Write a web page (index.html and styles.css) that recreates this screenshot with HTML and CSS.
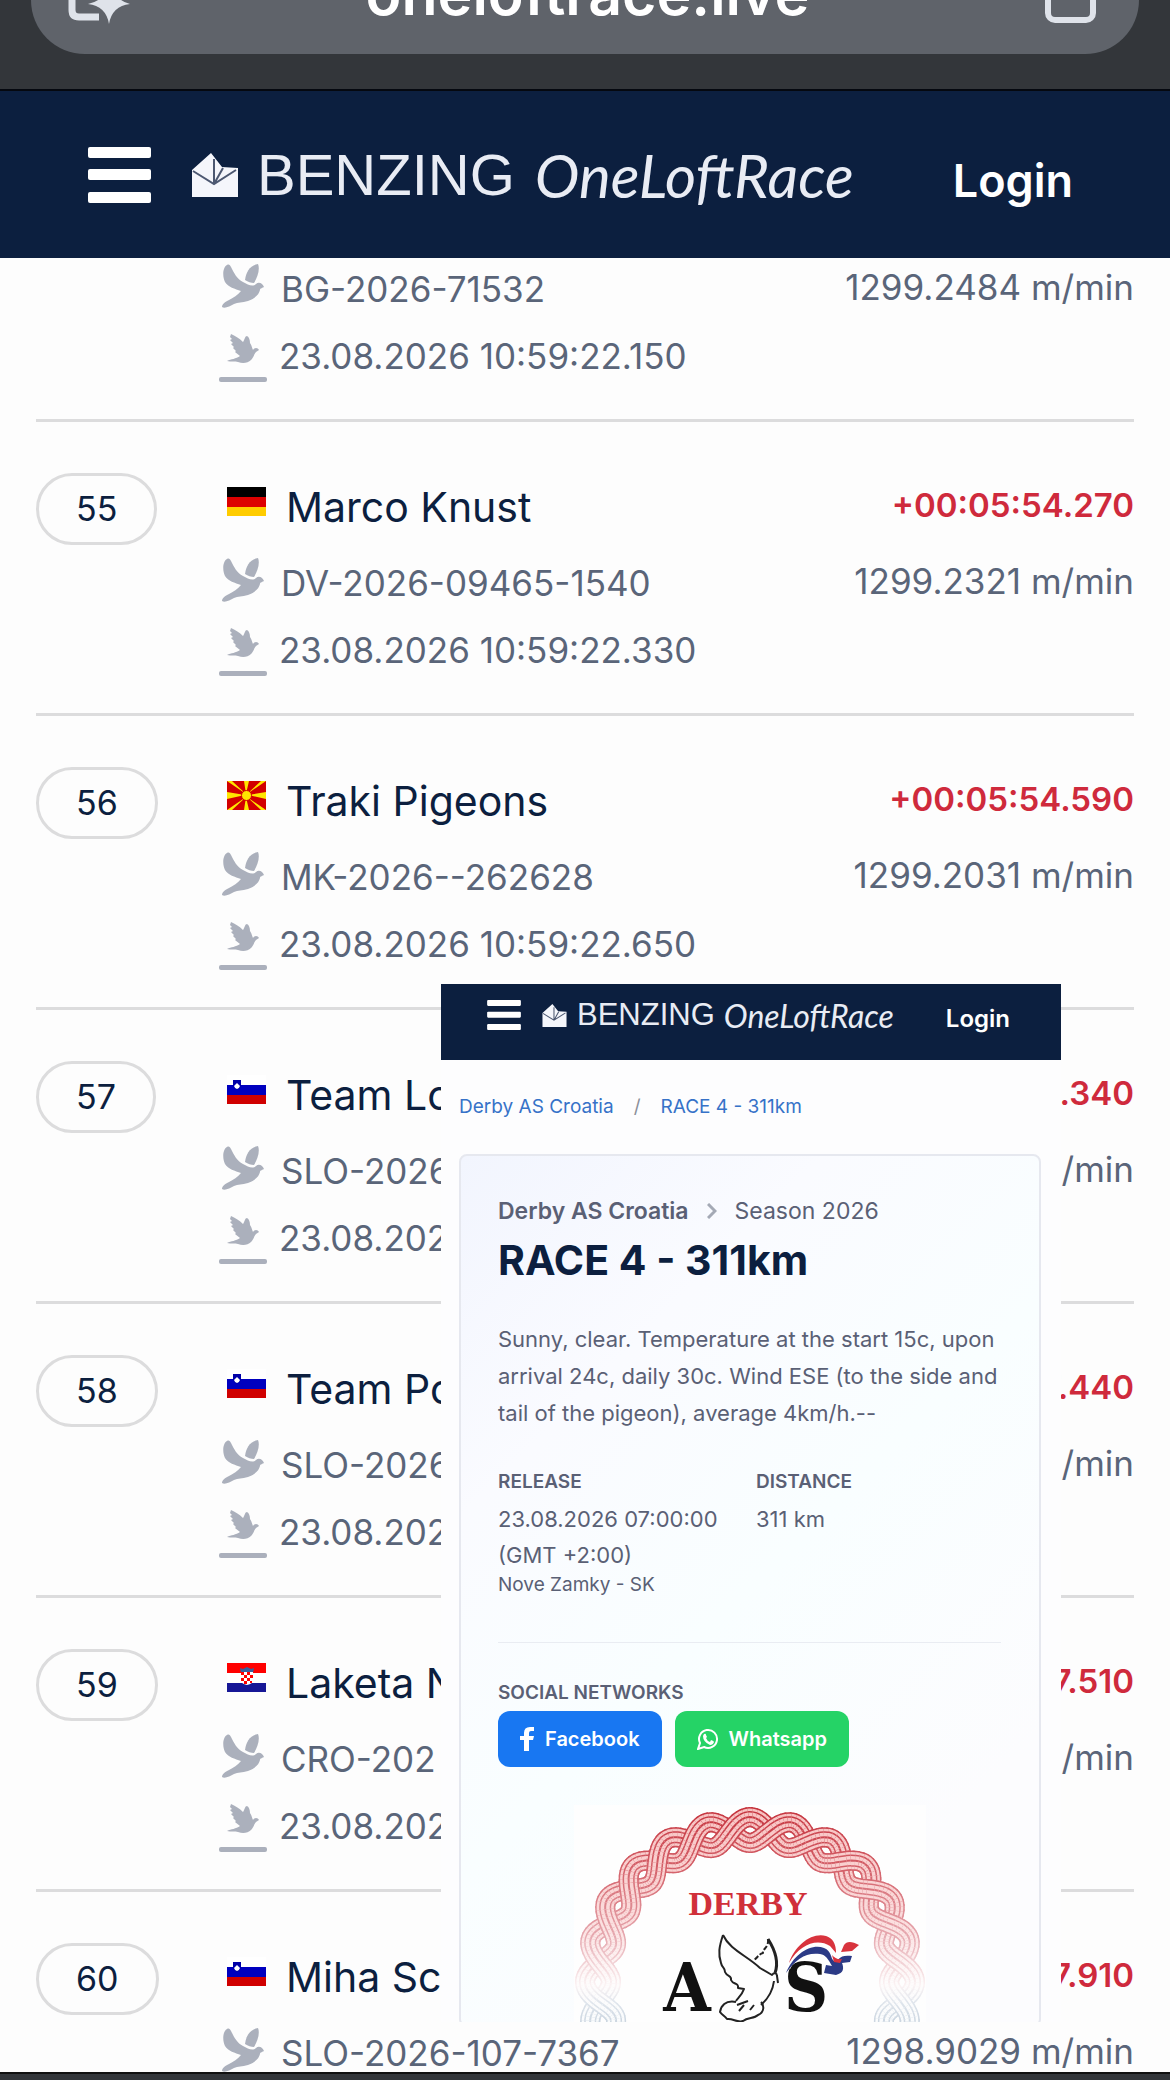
FILE: index.html
```
<!DOCTYPE html>
<html lang="en">

<head>
    <meta charset="UTF-8">
    <meta name="viewport" content="width=device-width, initial-scale=1.0">
    <title>oneloftrace.live</title>
    <link rel="stylesheet" href="styles.css">
</head>

<body>

    <svg width="0" height="0" class="sprite" aria-hidden="true">
        <symbol id="bird" viewBox="0 0 42 44">
            <path d="M5 1C1 3 0 12 3 18C6 23 13 25 19 27C16 31 11 34 7 36C3 38 0 40 0 43C3 45 8 42 12 40C16 38 20 39 26 37C34 34 37 30 38 26C38 24 41 24 42 23C41 20 37 17 34 20C31 23 26 21 21 18C15 15 12 9 9 3C8 1 7 0 5 1Z" />
            <path d="M23 16C24 8 28 1 36 0C38 5 36 12 32 19C29 19 26 18 23 16Z" />
        </symbol>
        <symbol id="landing" viewBox="0 0 48 48">
            <path d="M12 0L11 3L13 5L11 6L14 9L12 10L15 13L14 14L17 17L16 18L21 22C17 25 12 25 8 27C12 28 16 27 19 28C24 30 29 29 32 26C35 23 35 20 37 18L40 16C39 14 36 13 34 16C33 14 33 12 31 9C31 6 30 3 28 2C26 2 26 5 24 8C20 4 16 2 12 0Z" />
            <rect y="43" width="48" height="5" rx="2" />
        </symbol>
        <symbol id="flag-de" viewBox="0 0 39 29">
            <rect width="39" height="10" />
            <rect y="10" width="39" height="10" fill="#d00" />
            <rect y="20" width="39" height="9" fill="#fc0" />
        </symbol>
        <symbol id="flag-mk" viewBox="0 0 39 29">
            <rect width="39" height="29" fill="#d20000" />
            <path d="M0 0h5L19 13zM39 0h-5L20 13zM0 29h5L19 16zM39 29h-5L20 16zM17 0h5L19 13zM17 29h5L19 16zM0 11v7l18-4zM39 11v7L21 14z" fill="#ffe600" />
            <circle cx="19.500" cy="14.500" r="5" fill="#ffe600" stroke="#d20000" />
        </symbol>
        <symbol id="flag-si" viewBox="0 0 39 29">
            <rect width="39" height="10" fill="#fff" />
            <rect y="10" width="39" height="10" fill="#0000bf" />
            <rect y="20" width="39" height="9" fill="#d00000" />
            <path d="M6 5h8v5q0 3-4 5q-4-2-4-5z" fill="#0000a8" />
            <path d="M7 11l3-3l3 3q-1 3-3 3t-3-3z" fill="#fff" />
        </symbol>
        <symbol id="flag-hr" viewBox="0 0 39 29">
            <rect width="39" height="10" fill="#f00" />
            <rect y="10" width="39" height="10" fill="#fff" />
            <rect y="20" width="39" height="9" fill="#171796" />
            <path d="M13 5l3 1l4-2l4 2l3-1l-1 5h-12z" fill="#37609c" />
            <path d="M14 9h12v8q0 4-6 5q-6-1-6-5z" fill="#fff" />
            <path d="M14 9h3v3h-3zM20 9h3v3h-3zM17 12h3v3h-3zM23 12h3v3h-3zM14 15h3v3h-3zM20 15h3v3h-3zM17 18h3v3h-3zM23 18h2v2h-2z" fill="#f00" />
        </symbol>
        <symbol id="menu" viewBox="0 0 63 56">
            <rect width="63" height="11" rx="2" />
            <rect y="22" width="63" height="11" rx="2" />
            <rect y="45" width="63" height="11" rx="2" />
        </symbol>
        <symbol id="loft" viewBox="0 0 46 44">
            <path d="M0 17L19 0L30 14L46 15V44H0Z" />
            <path d="M1 18L22 31L44 17M22 31V6M22 31L31 15" fill="none" stroke="#4d5871" stroke-width="2" />
        </symbol>
    </svg>

    <div class="app">

        <div class="browser-bar">
            <div class="address">
                <button class="tab-btn" aria-label="Page tools">
                    <svg width="62" height="50" viewBox="0 0 62 50">
                        <path d="M4 0V36Q4 43 11 43H31" fill="none" stroke="#dfe3ea" stroke-width="7" />
                        <path d="M41 0Q41 26 20 30Q38 32 41 50Q44 32 62 30Q44 26 41 0Z" fill="#dfe3ea" />
                    </svg>
                </button>
                <span class="url">oneloftrace.live</span>
                <button class="tab-btn" aria-label="Tabs">
                    <svg width="52" height="46" viewBox="0 0 52 46">
                        <rect x="3" y="-10" width="45" height="52" rx="7" fill="none" stroke="#dfe3ea" stroke-width="6" />
                    </svg>
                </button>
            </div>
        </div>

        <header class="site-header">
            <button class="menu-btn" aria-label="Menu"><svg><use href="#menu" /></svg></button>
            <a class="brand" href="#">
                <svg><use href="#loft" /></svg>
                <span class="brand-name">BENZING</span>
                <em>OneLoftRace</em>
            </a>
            <a class="login" href="#">Login</a>
        </header>

        <ol class="results">
            <li class="entry cut">
                <div class="pigeon">
                    <p class="ring"><svg class="bird"><use href="#bird" /></svg>BG-2026-71532</p>
                    <p class="arrival"><svg class="landing"><use href="#landing" /></svg>23.08.2026 10:59:22.150</p>
                </div>
                <div class="timing">
                    <p class="speed">1299.2484 m/min</p>
                </div>
            </li>
            <li class="entry">
                <span class="rank">55</span>
                <div class="pigeon">
                    <h2><svg class="flag"><use href="#flag-de" /></svg>Marco Knust</h2>
                    <p class="ring"><svg class="bird"><use href="#bird" /></svg>DV-2026-09465-1540</p>
                    <p class="arrival"><svg class="landing"><use href="#landing" /></svg>23.08.2026 10:59:22.330</p>
                </div>
                <div class="timing">
                    <p class="gap">+00:05:54.270</p>
                    <p class="speed">1299.2321 m/min</p>
                </div>
            </li>
            <li class="entry">
                <span class="rank">56</span>
                <div class="pigeon">
                    <h2><svg class="flag"><use href="#flag-mk" /></svg>Traki Pigeons</h2>
                    <p class="ring"><svg class="bird"><use href="#bird" /></svg>MK-2026--262628</p>
                    <p class="arrival"><svg class="landing"><use href="#landing" /></svg>23.08.2026 10:59:22.650</p>
                </div>
                <div class="timing">
                    <p class="gap">+00:05:54.590</p>
                    <p class="speed">1299.2031 m/min</p>
                </div>
            </li>
            <li class="entry">
                <span class="rank">57</span>
                <div class="pigeon">
                    <h2><svg class="flag"><use href="#flag-si" /></svg>Team Lo</h2>
                    <p class="ring"><svg class="bird"><use href="#bird" /></svg>SLO-2026</p>
                    <p class="arrival"><svg class="landing"><use href="#landing" /></svg>23.08.202</p>
                </div>
                <div class="timing">
                    <p class="gap">.340</p>
                    <p class="speed">/min</p>
                </div>
            </li>
            <li class="entry">
                <span class="rank">58</span>
                <div class="pigeon">
                    <h2><svg class="flag"><use href="#flag-si" /></svg>Team Po</h2>
                    <p class="ring"><svg class="bird"><use href="#bird" /></svg>SLO-2026</p>
                    <p class="arrival"><svg class="landing"><use href="#landing" /></svg>23.08.202</p>
                </div>
                <div class="timing">
                    <p class="gap">7.440</p>
                    <p class="speed">/min</p>
                </div>
            </li>
            <li class="entry">
                <span class="rank">59</span>
                <div class="pigeon">
                    <h2><svg class="flag"><use href="#flag-hr" /></svg>Laketa N</h2>
                    <p class="ring"><svg class="bird"><use href="#bird" /></svg>CRO-202</p>
                    <p class="arrival"><svg class="landing"><use href="#landing" /></svg>23.08.202</p>
                </div>
                <div class="timing">
                    <p class="gap">7.510</p>
                    <p class="speed">/min</p>
                </div>
            </li>
            <li class="entry">
                <span class="rank">60</span>
                <div class="pigeon">
                    <h2><svg class="flag"><use href="#flag-si" /></svg>Miha Sc</h2>
                    <p class="ring"><svg class="bird"><use href="#bird" /></svg>SLO-2026-107-7367</p>
                    <p class="arrival"></p>
                </div>
                <div class="timing">
                    <p class="gap">7.910</p>
                    <p class="speed">1298.9029 m/min</p>
                </div>
            </li>
        </ol>

        <div class="bottom-bar"></div>

        <!-- race info, lies over the result list -->
        <section class="race-window">
            <header class="site-header small">
                <button class="menu-btn" aria-label="Menu"><svg><use href="#menu" /></svg></button>
                <a class="brand" href="#">
                    <svg><use href="#loft" /></svg>
                    <span class="brand-name">BENZING</span>
                    <em>OneLoftRace</em>
                </a>
                <a class="login" href="#">Login</a>
            </header>

            <nav class="crumbs">
                <a href="#">Derby AS Croatia</a>
                <span>/</span>
                <a href="#">RACE 4 - 311km</a>
            </nav>

            <div class="race-card">
                <p class="season">
                    <strong>Derby AS Croatia</strong>
                    <svg width="10" height="16" viewBox="0 0 10 16"><path d="M1 1L8 8L1 15" fill="none" stroke="#a4a9b5" stroke-width="3" /></svg>
                    Season 2026
                </p>
                <h1>RACE 4 - 311km</h1>
                <p class="weather">Sunny, clear. Temperature at the start 15c, upon arrival 24c, daily 30c. Wind ESE (to the side and tail of the pigeon), average 4km/h.--</p>

                <div class="facts">
                    <div>
                        <h3>RELEASE</h3>
                        <p>23.08.2026 07:00:00<br>(GMT +2:00)</p>
                        <small>Nove Zamky - SK</small>
                    </div>
                    <div>
                        <h3>DISTANCE</h3>
                        <p>311 km</p>
                    </div>
                </div>

                <h3>SOCIAL NETWORKS</h3>
                <div class="social">
                    <button class="facebook">
                        <svg width="15" height="24" viewBox="0 0 15 24"><path d="M4 24V13H0V9H4V6Q4 0 10 0H14V4H11Q9 4 9 6V9H14L13 13H9V24Z" fill="#fff" /></svg>
                        Facebook
                    </button>
                    <button class="whatsapp">
                        <svg width="22" height="22" viewBox="0 0 22 22">
                            <path d="M1 21L3 15A9 9 0 1 1 7 19Z" fill="none" stroke="#fff" stroke-width="2" />
                            <path d="M7 6Q9 5 9 7L10 9L9 10Q10 13 13 14L14 12Q17 13 17 14Q16 17 13 17Q6 14 6 8Z" fill="#fff" />
                        </svg>
                        Whatsapp
                    </button>
                </div>

                <svg class="derby-logo" viewBox="0 0 352 220">
                    <defs>
                        <linearGradient id="edge" gradientUnits="userSpaceOnUse" x1="0" y1="0" x2="0" y2="220">
                            <stop offset="0" stop-color="#c4303a" />
                            <stop offset="0.300" stop-color="#d4626b" />
                            <stop offset="0.600" stop-color="#e6a9b0" />
                            <stop offset="0.820" stop-color="#fbf3f4" />
                            <stop offset="0.900" stop-color="#dfe5ec" />
                            <stop offset="1" stop-color="#c8d3de" />
                        </linearGradient>
                        <linearGradient id="fill" gradientUnits="userSpaceOnUse" x1="0" y1="0" x2="0" y2="220">
                            <stop offset="0" stop-color="#f8c2c1" />
                            <stop offset="0.500" stop-color="#fbdcdc" />
                            <stop offset="0.800" stop-color="#fefcfc" />
                            <stop offset="1" stop-color="#fafcfd" />
                        </linearGradient>
                    </defs>
                    <rect width="352" height="220" fill="#fefefe" />
                    <g id="braid" fill="none"></g>
                    <text x="174" y="110" class="derby-text">DERBY</text>
                    <text x="113" y="206" class="derby-letter">A</text>
                    <text x="232" y="206" class="derby-letter">S</text>
                    <g fill="none" stroke="#222" stroke-width="2" stroke-linejoin="round">
                        <path d="M149 130C145 142 144 149 147 158C148 163 151 162 151 167C153 172 158 170 157 175C159 180 165 177 164 183L170 184C168 190 164 193 162 196" />
                        <path d="M149 130C156 145 172 150 186 163L198 170C200 167 203 168 203 171L204 178M200 176C199 184 196 192 187 200" />
                        <path d="M194 134C201 145 205 157 201 168" stroke-width="3" />
                        <path d="M194 134C195 143 188 144 189 148C185 149 184 152 180 155" stroke-dasharray="5 2" />
                        <path d="M162 197C151 195 147 201 146 207C148 210 151 211 153 214C159 213 163 218 169 216C174 212 180 214 184 210C191 207 190 200 187 197M163 200L174 196M165 206L170 200M176 205L180 200" />
                    </g>
                    <path d="M214 163C221 144 238 133 253 139C262 143 259 149 268 151" fill="none" stroke="#fff" stroke-width="5" />
                    <path d="M215 158C221 140 238 127 252 131Q262 134 262 148L256 141C243 133 226 139 215 158Z" fill="#d8333d" />
                    <path d="M212 168C220 148 238 138 250 143C258 146 256 153 260 156C266 156 264 149 278 151L276 157L268 158C270 163 270 168 262 170L250 168L252 160L258 161C254 154 252 150 246 149C232 147 222 154 212 168Z" fill="#2b3a86" />
                    <path d="M258 150Q262 155 268 154L266 158L260 157ZM270 140Q274 134 285 140L278 146L267 147Z" fill="#d8333d" />
                </svg>
            </div>
        </section>

    </div>

    <script>

        // two strands twisted round the arch, short pieces drawn from back to front
        let pieces = [];
        let step = 0.02;

        function phase(a, strand) {
            return 12 * a + Math.PI / 2 + strand * Math.PI;
        }

        function point(a, strand) {
            let r = 152 + 13 * Math.sin(phase(a, strand));
            return (176 - r * Math.cos(a)).toFixed(1) + " " + (177 - r * Math.sin(a)).toFixed(1);
        }

        for (let strand = 0; strand < 2; strand++) {
            for (let a = -0.4; a < Math.PI + 0.4; a += step) {
                pieces.push({ depth: Math.cos(phase(a, strand)), from: a - step / 2, to: a + step * 1.2, strand: strand });
            }
        }

        pieces.sort((a, b) => a.depth - b.depth);

        let out = "";
        for (let p of pieces) {
            let d = "M" + point(p.from, p.strand) + "L" + point((p.from + p.to) / 2, p.strand) + "L" + point(p.to, p.strand);
            [["edge", 20], ["fill", 17], ["edge", 12], ["fill", 9], ["edge", 2]].forEach(s => {
                out += `<path d="${d}" stroke="url(#${s[0]})" stroke-width="${s[1]}" />`;
            });
        }
        document.getElementById("braid").innerHTML = out;

    </script>

</body>

</html>
```
FILE: styles.css
```
* {
    box-sizing: border-box;
}

body, h1, h2, h3, p, ol {
    margin: 0;
    padding: 0;
}

body {
    font-family: Inter, "Liberation Sans", sans-serif;
    color: #0c1f3f;
    background: #fdfdfd;
}

button {
    font: inherit;
    border: 0;
    padding: 0;
    background: none;
}

a {
    text-decoration: none;
}

.sprite {
    position: absolute;
}

.app {
    position: relative;
    display: flex;
    flex-direction: column;
    height: 100vh;
    overflow: hidden;
}

/* browser chrome */

.browser-bar {
    flex: none;
    height: 91px;
    padding: 0 31px;
    background: #33363a;
    border-bottom: 2px solid #05080f;
}

.address {
    display: flex;
    justify-content: space-between;
    align-items: flex-end;
    height: 54px;
    padding: 0 42px 30px 37px;
    background: #5f636a;
    border-radius: 0 0 54px 54px;
}

.url {
    font-size: 59px;
    line-height: 60px;
    font-weight: 600;
    color: #fff;
}

.tab-btn svg {
    display: block;
}

/* site header */

.site-header {
    flex: none;
    display: flex;
    align-items: center;
    height: 167px;
    padding: 0 97px 0 88px;
    background: #0c1f3f;
}

.menu-btn svg {
    display: block;
    width: 63px;
    height: 56px;
    fill: #fff;
}

.brand {
    display: flex;
    align-items: center;
    margin-left: 41px;
    font-family: "Liberation Sans", sans-serif;
    font-size: 58px;
    color: #e9ecf4;
}

.brand svg {
    width: 46px;
    height: 44px;
    margin-right: 19px;
    fill: #f5f6fb;
}

.brand em {
    margin-left: 20px;
    font-family: Lato, sans-serif;
    font-size: 60px;
}

.login {
    margin-left: auto;
    padding-top: 12px;
    font-size: 45px;
    font-weight: 600;
    color: #fff;
}

/* results */

.results {
    flex: 1;
    min-height: 0;
    overflow: hidden;
    padding: 0 36px;
    list-style: none;
}

.entry {
    display: flex;
    align-items: flex-end;
    height: 294px;
    padding-bottom: 34px;
    border-bottom: 3px solid #dcdcdd;
}

.entry.cut {
    height: 164px;
}

.rank {
    align-self: flex-start;
    margin-top: 51px;
    padding: 0 37px;
    border: 3px solid #dcdcdd;
    border-radius: 36px;
    font-size: 34px;
    line-height: 66px;
}

.pigeon {
    position: absolute;
    left: 219px;
}

.pigeon h2, .pigeon p {
    display: flex;
    align-items: center;
    height: 76px;
    white-space: nowrap;
}

.pigeon h2 {
    padding-left: 8px;
    font-size: 41px;
    font-weight: 400;
}

.pigeon p, .speed {
    font-size: 35px;
    color: #5a6579;
}

.pigeon .ring {
    padding-left: 3px;
}

.pigeon .arrival {
    height: 58px;
}

.flag {
    width: 39px;
    height: 29px;
    margin: 0 20px 12px 0;
}

.bird {
    width: 42px;
    height: 44px;
    margin: 0 17px 6px 0;
    fill: #abb0bc;
}

.landing {
    width: 48px;
    height: 48px;
    margin: 4px 12px 0 0;
    fill: #abb0bc;
}

.timing {
    margin-left: auto;
    padding-bottom: 60px;
    text-align: right;
    line-height: 76px;
}

.gap {
    font-size: 33px;
    font-weight: 600;
    color: #cf2a3c;
}

.bottom-bar {
    flex: none;
    height: 8px;
    background: #33363a;
    border-top: 2px solid #111;
}

/* race window */

.race-window {
    position: absolute;
    top: 984px;
    right: 109px;
    bottom: 58px;
    left: 441px;
    overflow: hidden;
    background: #fdfdfe;
}

.small {
    height: 76px;
    padding: 0 51px 14px 46px;
}

.small .menu-btn svg {
    width: 34px;
    height: 30px;
}

.small .brand {
    margin-left: 21px;
    font-size: 31px;
}

.small .brand svg {
    width: 25px;
    height: 23px;
    margin-right: 10px;
}

.small .brand em {
    margin-left: 9px;
    font-size: 32px;
}

.small .login {
    padding-top: 6px;
    font-size: 24px;
}

.crumbs {
    display: flex;
    gap: 20px;
    padding: 35px 18px 35px;
    font-size: 19px;
    line-height: 24px;
    color: #8a8f99;
}

.crumbs a {
    color: #3672c8;
}

.race-card {
    margin: 0 20px 0 18px;
    padding: 37px 38px 0 37px;
    border: 2px solid #e6e8ef;
    border-radius: 8px;
    background: linear-gradient(135deg, #f2f5fe, #fafbff 25%, #f9feff 50%, #fcfcfe 80%);
    color: #5a6075;
}

.season {
    display: flex;
    align-items: center;
    gap: 18px;
    font-size: 23px;
    line-height: 36px;
}

.season strong {
    font-weight: 600;
}

.race-card h1 {
    margin-bottom: 30px;
    font-size: 41px;
    line-height: 62px;
    font-weight: 700;
    color: #0c1f3f;
}

.weather {
    margin-bottom: 36px;
    font-size: 22px;
    line-height: 37px;
}

.race-card h3 {
    font-size: 19px;
    line-height: 28px;
    font-weight: 600;
}

.facts {
    display: grid;
    grid-template-columns: 230px 1fr;
    gap: 28px;
    margin-bottom: 36px;
    padding-bottom: 45px;
    border-bottom: 1px solid #e9ecf2;
}

.facts p {
    padding-top: 5px;
    font-size: 22px;
    line-height: 36px;
}

.facts small {
    display: block;
    font-size: 19px;
    line-height: 24px;
}

.social {
    display: flex;
    gap: 13px;
    margin: 4px 0 38px;
}

.social button {
    display: flex;
    align-items: center;
    gap: 10px;
    height: 56px;
    padding: 0 22px;
    border-radius: 12px;
    font-size: 20px;
    font-weight: 600;
    color: #fff;
}

.social .facebook {
    background: #1877f2;
}

.social .whatsapp {
    background: #25d366;
}

.derby-logo {
    display: block;
    width: 352px;
    height: 220px;
    margin: 0 auto;
}

.derby-text {
    font: 700 34px "Liberation Serif", serif;
    text-anchor: middle;
    fill: #d0303a;
}

.derby-letter {
    font: 700 68px "DejaVu Serif Condensed", "DejaVu Serif", serif;
    text-anchor: middle;
    fill: #111;
}
```
